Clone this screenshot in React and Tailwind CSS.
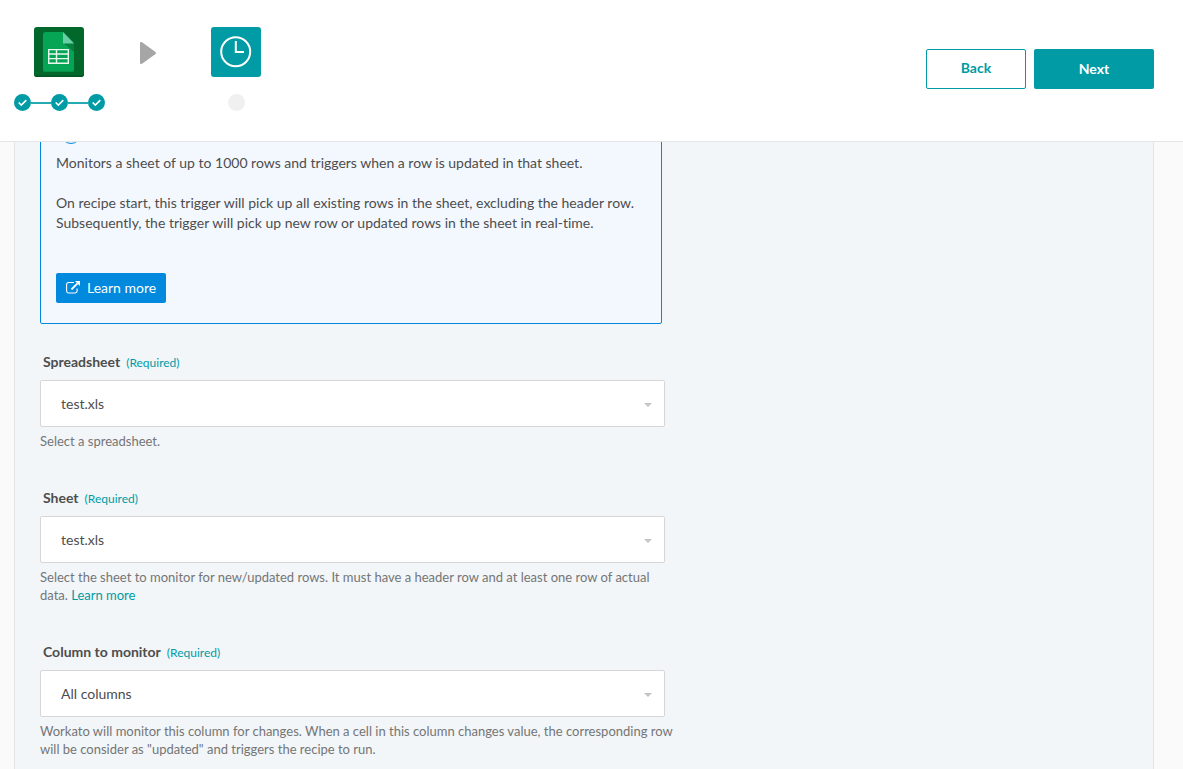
import React, { useId } from "react";

function SheetsIcon() {
  return (
    <svg className="size-[50px]" viewBox="0 0 50 50" aria-hidden="true">
      <rect width="50" height="50" rx="3" fill="#02672b" />
      <path d="M0 46.500V47a3 3 0 0 0 3 3h44a3 3 0 0 0 3-3v-.500a3 3 0 0 1-3 2H3a3 3 0 0 1-3-2z" fill="#045524" />
      <path d="M11.500 5H29l11 11v26.500a2.500 2.500 0 0 1-2.500 2.500h-26A2.500 2.500 0 0 1 9 42.500v-35A2.500 2.500 0 0 1 11.500 5z" fill="#05a555" />
      <path d="M9 41.500v1a2.500 2.500 0 0 0 2.500 2.500h26a2.500 2.500 0 0 0 2.500-2.500v-1a2.500 2.500 0 0 1-2.500 2.500h-26A2.500 2.500 0 0 1 9 41.500z" fill="#078f48" />
      <path d="M29.500 16H40v9z" fill="#04803f" />
      <path d="M29 5l11 11.500H29z" fill="#68cfa5" />
      <path d="M14 22h21v15H14zM15.400 23.300v3h6.400v-3zM23.200 23.300v3h10.400v-3zM15.400 27.700v3.200h6.400v-3.200zM23.200 27.700v3.200h10.400v-3.200zM15.400 32.300v3.200h6.400v-3.200zM23.200 32.300v3.200h10.400v-3.200z" fill="#e9f8ee" fillRule="evenodd" />
    </svg>
  );
}

function ClockIcon() {
  return (
    <svg className="size-[50px]" viewBox="0 0 50 50" aria-hidden="true">
      <rect width="50" height="50" rx="3" fill="#009ba4" />
      <circle cx="24.700" cy="24.700" r="14.500" fill="none" stroke="#fff" strokeWidth="2" />
      <path d="M24.800 14v11H33" fill="none" stroke="#fff" strokeWidth="2" />
    </svg>
  );
}

function CheckDot() {
  return (
    <svg className="size-[17px] shrink-0" viewBox="0 0 17 17" aria-hidden="true">
      <circle cx="8.500" cy="8.500" r="8.500" fill="#009ba4" />
      <path d="M4.700 8.500l2.600 2.600 5-5" fill="none" stroke="#fff" strokeWidth="1.600" />
    </svg>
  );
}

function Steps() {
  return (
    <div className="flex items-center">
      <CheckDot />
      <span className="h-[2px] w-5 bg-[#26aab1]" />
      <CheckDot />
      <span className="h-[2px] w-5 bg-[#26aab1]" />
      <CheckDot />
    </div>
  );
}

function Header() {
  return (
    <header className="flex shrink-0 items-start justify-between border-b border-[#e3e5e6] bg-white pr-[29px] pb-[30px] pl-[14px]">
      <div className="flex pt-[27px]">
        <div className="flex flex-col gap-[17px]">
          <div className="pl-5">
            <SheetsIcon />
          </div>
          <Steps />
        </div>
        <svg className="mt-[14px] ml-[35px] h-6 w-4" viewBox="0 0 16 24" aria-hidden="true">
          <path d="M0 2.500C0 1 1.300.600 2.400 1.400l12.800 9.400c1 .800 1 1.600 0 2.400L2.400 22.600C1.300 23.400 0 23 0 21.500z" fill="#a6a6a6" />
        </svg>
        <div className="ml-[55px] flex flex-col items-center gap-[17px]">
          <ClockIcon />
          <span className="size-[17px] rounded-full bg-[#f0f0f0]" />
        </div>
      </div>
      <div className="flex gap-2 pt-[49px] text-[14px] leading-5 font-bold">
        <button type="button" className="h-10 w-[100px] rounded-[2px] border border-[#009ba4] bg-white pb-[2px] text-[#009ba4]">
          Back
        </button>
        <button type="button" className="h-10 w-[120px] rounded-[2px] bg-[#009ba4] text-white">
          Next
        </button>
      </div>
    </header>
  );
}

function InfoCard() {
  return (
    <section className="mr-[3px] flex flex-col items-start rounded-[2px] border border-[#0089dd] bg-[#f3f8ff] px-[15px] pt-[15px] pb-5 text-[14px] leading-5">
      <svg className="ml-[5px] size-5" viewBox="0 0 20 20" fill="none" stroke="#0089dd" aria-hidden="true">
        <circle cx="10" cy="10" r="9.500" />
        <path d="M10 9v5.500M10 5.500v1.500" />
      </svg>
      <p className="mt-[9px]">Monitors a sheet of up to 1000 rows and triggers when a row is updated in that sheet.</p>
      <p className="mt-5">
        On recipe start, this trigger will pick up all existing rows in the sheet, excluding the header row.
        Subsequently, the trigger will pick up new row or updated rows in the sheet in real-time.
      </p>
      <a href="#learn-more" className="mt-10 flex h-[30px] items-center gap-[7px] rounded-[2px] bg-[#0089dd] px-[10px] text-white">
        <svg className="size-[14px]" viewBox="0 0 14 14" fill="none" aria-hidden="true">
          <path d="M8 1.500H2.500A1.900 1.900 0 0 0 .600 3.400v6.700A1.900 1.900 0 0 0 2.500 12h6.700a1.900 1.900 0 0 0 1.900-1.900V7.500" stroke="#fff" strokeWidth="1.100" />
          <path d="M5.500 8.300L11.500 2.300" stroke="#fff" strokeWidth="1.900" />
          <path d="M9 0h5v5z" fill="#fff" />
        </svg>
        Learn more
      </a>
    </section>
  );
}

function Field({ label, value, children }) {
  const id = useId();
  return (
    <div>
      <div className="flex h-5 items-baseline gap-[6px] pl-[3px] leading-5">
        <label htmlFor={id} className="text-[14px] font-bold">{label}</label>
        <span className="text-[12px] text-[#009ba4]">(Required)</span>
      </div>
      <div className="mt-2 grid items-center">
        <select
          id={id}
          className="col-start-1 row-start-1 h-[47px] w-full appearance-none rounded-[2px] border border-[#d6d6d6] bg-white px-5 text-[14px]"
        >
          <option>{value}</option>
        </select>
        <svg className="pointer-events-none col-start-1 row-start-1 mt-[2px] mr-[13px] h-1 w-2 justify-self-end" viewBox="0 0 8 4" aria-hidden="true">
          <path d="M0 0h8L4 4z" fill="#c4c4c4" />
        </svg>
      </div>
      <p className="mt-[5px] -mr-3 text-[13px] leading-[18px] text-[#757575]">{children}</p>
    </div>
  );
}

export default function App() {
  return (
    <div className="flex h-screen flex-col overflow-hidden bg-[#fafafa] font-[Lato,sans-serif] text-[#4d4d4d] [font-variant-ligatures:none]">
      <Header />
      <main className="mr-[29px] ml-[14px] min-h-0 flex-1 overflow-hidden border-x border-[#e3e5e6] bg-[#f2f6f9]">
        <div className="-mt-[34px] max-w-[650px] pl-[25px]">
          <InfoCard />
          <form className="mt-7 flex flex-col gap-[38px]">
            <Field label="Spreadsheet" value="test.xls">Select a spreadsheet.</Field>
            <Field label="Sheet" value="test.xls">
              Select the sheet to monitor for new/updated rows. It must have a header row and at least one row of actual data.{" "}
              <a href="#sheet-help" className="text-[#009ba4]">Learn more</a>
            </Field>
            <Field label="Column to monitor" value="All columns">
              Workato will monitor this column for changes. When a cell in this column changes value, the corresponding row
              will be consider as "updated" and triggers the recipe to run.
            </Field>
          </form>
        </div>
      </main>
    </div>
  );
}
